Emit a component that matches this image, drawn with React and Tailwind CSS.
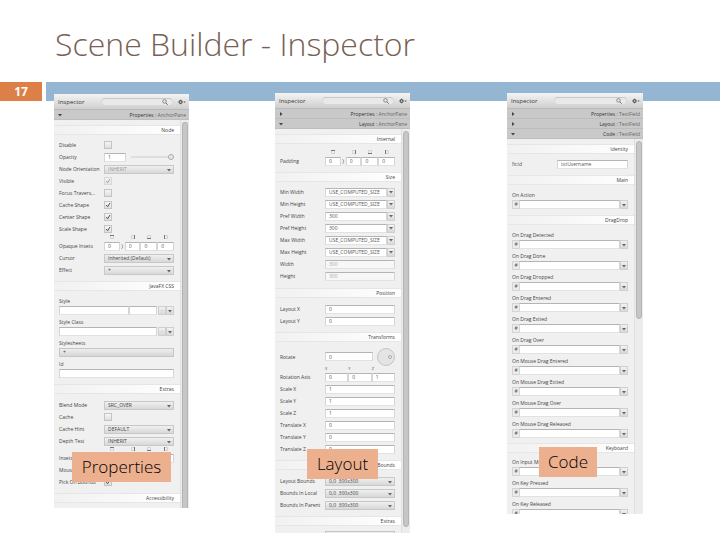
import { useId } from "react";
import clsx from "clsx";

const textBox =
  "h-[9px] min-w-0 border border-t-[#b4b4b4] border-x-[#d6d6d6] border-b-[#e2e2e2] bg-white pl-[3px] text-[5px] leading-[7px] text-[#555] outline-none";
const smallButton =
  "flex h-[9px] w-2 shrink-0 items-center justify-center border border-[#cfcfcf] bg-gradient-to-b from-[#f2f2f2] to-[#d9d9d9]";

function Arrow({ className = "fill-[#666]", dir = "down" }) {
  return (
    <svg viewBox="0 0 4 4" className={clsx("size-1 shrink-0", className)} aria-hidden="true">
      <path d={dir === "down" ? "M0 1h4L2 3.5z" : "M1 0v4L3.5 2z"} />
    </svg>
  );
}

function Header() {
  return (
    <div className="flex h-4 items-center gap-[5px] border-b border-[#b9b9b9] bg-gradient-to-b from-[#f4f4f4] to-[#cfcfcf] pr-[3px] pl-1">
      <h2 className="w-[38px] text-[6px] leading-[8px] text-[#333]">Inspector</h2>
      <div className="flex h-2 min-w-0 flex-1 items-center rounded-full border border-[#d8d8d8] border-t-[#c8c8c8] bg-[#e9e9e9] pr-1">
        <input type="search" aria-label="Search" className="h-full min-w-0 flex-1 bg-transparent pl-1 text-[5px] outline-none" />
        <svg viewBox="0 0 6 6" className="size-[6px] shrink-0 fill-none stroke-[#666]" aria-hidden="true">
          <circle cx="2.5" cy="2.4" r="1.8" strokeWidth="0.7" />
          <path d="M3.8 3.8l2 2" strokeWidth="0.9" />
        </svg>
      </div>
      <button aria-label="Options" className="shrink-0">
        <svg viewBox="0 0 8 6" className="h-[6px] w-2" aria-hidden="true">
          <circle cx="2.6" cy="3" r="1.4" fill="none" stroke="#555" strokeWidth="1.1" />
          <path d="M2.6 .6v1M2.6 4.4v1M.2 3h1M4 3h1" stroke="#555" strokeWidth="0.7" />
          <path d="M5.4 2.4h2.4L6.6 4z" fill="#666" />
        </svg>
      </button>
    </div>
  );
}

function PaneTitle({ name, type, open }) {
  return (
    <button className="flex h-[10px] w-full items-center justify-between border-b border-[#bdbdbd] bg-[#c9c9c9] pr-[3px] pl-1 text-[5px] leading-[8px]">
      <Arrow dir={open ? "down" : "right"} className="fill-[#444]" />
      <span className="text-[#333]">
        {name} <span className="text-[#666]">: {type}</span>
      </span>
    </button>
  );
}

function Section({ title, children, className }) {
  return (
    <section>
      <h3 className="h-[10px] border-y border-[#e6e6e6] bg-gradient-to-r from-[#f1f1f1] to-white pr-[6px] text-right text-[5px] leading-[8px] text-[#444]">
        {title}
      </h3>
      <div className={clsx("pr-[6px] pl-[5px]", className)}>{children}</div>
    </section>
  );
}

function Row({ label, id, children, tall }) {
  return (
    <div className={clsx("flex items-center", tall ? "h-[19px]" : "h-3")}>
      <label htmlFor={id} className="w-[45px] shrink-0 whitespace-nowrap text-[5px] leading-[8px] text-[#444]">
        {label}
      </label>
      <div className="flex min-w-0 flex-1 items-center">{children}</div>
    </div>
  );
}

function CheckRow({ label, checked, disabled }) {
  const id = useId();
  return (
    <Row label={label} id={id}>
      <span className={clsx("relative size-2", disabled && "opacity-50")}>
        <input
          id={id}
          type="checkbox"
          defaultChecked={checked}
          disabled={disabled}
          className="peer block size-2 appearance-none border border-[#c4c4c4] bg-gradient-to-b from-[#f6f6f6] to-[#dedede]"
        />
        <svg viewBox="0 0 8 8" className="pointer-events-none absolute inset-0 hidden size-2 fill-none stroke-[#555] peer-checked:block">
          <path d="M2.2 4l1.4 1.8L6 2" />
        </svg>
      </span>
    </Row>
  );
}

function SelectRow({ label, value, disabled }) {
  const id = useId();
  return (
    <Row label={label} id={id}>
      <span className="relative min-w-0 flex-1">
        <select
          id={id}
          disabled={disabled}
          className="block h-[9px] w-full appearance-none border border-[#c8c8c8] bg-gradient-to-b from-[#f0f0f0] to-[#d8d8d8] pl-[3px] text-[5px] leading-[7px] text-[#444] disabled:text-[#999] disabled:opacity-100"
        >
          <option>{value}</option>
        </select>
        <Arrow className="pointer-events-none absolute top-[3px] right-[3px] fill-[#666]" />
      </span>
    </Row>
  );
}

function TextRow({ label, value, disabled }) {
  const id = useId();
  return (
    <Row label={label} id={id}>
      <input id={id} defaultValue={value} disabled={disabled} className={clsx(textBox, "flex-1 disabled:bg-[#f7f7f7] disabled:text-[#aaa]")} />
    </Row>
  );
}

function ComboRow({ label, value }) {
  const id = useId();
  return (
    <Row label={label} id={id}>
      <input id={id} defaultValue={value} className={clsx(textBox, "flex-1")} />
      <button aria-label={`${label} options`} className={smallButton}>
        <Arrow />
      </button>
    </Row>
  );
}

const sides = [
  { name: "top", edge: "M0 .5h4" },
  { name: "right", edge: "M3.5 0v4" },
  { name: "bottom", edge: "M0 3.5h4" },
  { name: "left", edge: "M.5 0v4" },
];

function InsetsRow({ label }) {
  const id = useId();
  const grid = "grid grid-cols-[16fr_5fr_16fr_17fr_17fr]";
  return (
    <>
      <div className={clsx(grid, "h-[5px] pl-[45px]")} aria-hidden="true">
        {sides.map((side, i) => (
          <svg key={side.name} viewBox="0 0 4 4" className={clsx("size-1 justify-self-center fill-none", i === 1 && "col-start-3")}>
            <path d="M.5 .5h3v3h-3z" stroke="#d2d2d2" />
            <path d={side.edge} stroke="#777" />
          </svg>
        ))}
      </div>
      <Row label={label} id={id}>
        <div className={clsx(grid, "min-w-0 flex-1 items-center")}>
          {sides.map((side, i) => (
            <input
              key={side.name}
              id={i === 0 ? id : undefined}
              aria-label={i === 0 ? undefined : `${label} ${side.name}`}
              defaultValue="0"
              className={clsx(textBox, "row-start-1 w-full", i === 1 && "col-start-3")}
            />
          ))}
          <svg viewBox="0 0 5 9" className="col-start-2 row-start-1 h-[9px] w-full fill-none stroke-[#999]">
            <path d="M1.5 2.5q2 .5 1 2q1 1.500-1 2" />
          </svg>
        </div>
      </Row>
    </>
  );
}

function OpacityRow() {
  const id = useId();
  return (
    <Row label="Opacity" id={id}>
      <input id={id} defaultValue="1" className={clsx(textBox, "w-[22px]")} />
      <input
        type="range"
        aria-label="Opacity slider"
        defaultValue="100"
        className="ml-[5px] h-2 min-w-0 flex-1 appearance-none bg-transparent [&::-webkit-slider-runnable-track]:h-[2px] [&::-webkit-slider-runnable-track]:bg-[#dedede] [&::-webkit-slider-thumb]:mt-[-2px] [&::-webkit-slider-thumb]:size-[6px] [&::-webkit-slider-thumb]:appearance-none [&::-webkit-slider-thumb]:rounded-full [&::-webkit-slider-thumb]:border [&::-webkit-slider-thumb]:border-[#aaa] [&::-webkit-slider-thumb]:bg-[#e6e6e6]"
      />
    </Row>
  );
}

function Stacked({ label, id, children }) {
  return (
    <div>
      <label htmlFor={id} className="block h-[9px] text-[5px] leading-[9px] whitespace-nowrap text-[#444]">
        {label}
      </label>
      <div className="flex">{children}</div>
    </div>
  );
}

function ListButtons({ name }) {
  return (
    <>
      <button aria-label={`Remove ${name}`} className={clsx(smallButton, "ml-px text-[5px] text-[#999]")}>
        -
      </button>
      <button aria-label={`${name} menu`} className={smallButton}>
        <Arrow />
      </button>
    </>
  );
}

function EventField({ label }) {
  const id = useId();
  return (
    <Stacked label={label} id={id}>
      <span className="h-[9px] w-[7px] border-y border-l border-[#d4d4d4] bg-[#ececec] text-center text-[5px] leading-[7px] text-[#555]">#</span>
      <input id={id} className={clsx(textBox, "flex-1")} />
      <button aria-label={`${label} options`} className={smallButton}>
        <Arrow />
      </button>
    </Stacked>
  );
}

function Inspector({ titles, caption, captionClass, thumbClass, className, children }) {
  return (
    <article className={clsx("relative min-w-0 bg-[#f0f0f0]", className)}>
      <Header />
      {titles.map((t) => (
        <PaneTitle key={t.name} {...t} />
      ))}
      <div className="flex">
        <div className="min-w-0 flex-1 border-r border-[#e0e0e0] pt-[5px]">{children}</div>
        <div className="flex w-2 shrink-0 justify-center bg-[#ececec] pt-[2px]">
          <div className={clsx("w-[6px] rounded-full border border-[#b4b4b4] bg-[#c6c6c6]", thumbClass)} />
        </div>
      </div>
      <p className={clsx("absolute flex h-[30px] items-center justify-center bg-[#ecb08e] text-[17px] font-light text-black", captionClass)}>
        {caption}
      </p>
    </article>
  );
}

const dragEvents = [
  "On Drag Detected",
  "On Drag Done",
  "On Drag Dropped",
  "On Drag Entered",
  "On Drag Exited",
  "On Drag Over",
  "On Mouse Drag Entered",
  "On Mouse Drag Exited",
  "On Mouse Drag Over",
  "On Mouse Drag Released",
];

function PropertiesPanel() {
  return (
    <Inspector
      titles={[{ name: "Properties", type: "AnchorPane", open: true }]}
      caption="Properties"
      captionClass="bottom-[26px] left-[18px] w-[99px]"
      thumbClass="rounded-b-none border-b-0"
      className="col-start-1 mt-px"
    >
      <Section title="Node" className="pt-1 pb-[5px]">
        <CheckRow label="Disable" />
        <OpacityRow />
        <SelectRow label="Node Orientation" value="INHERIT" disabled />
        <CheckRow label="Visible" checked disabled />
        <CheckRow label="Focus Travers..." />
        <CheckRow label="Cache Shape" checked />
        <CheckRow label="Center Shape" checked />
        <CheckRow label="Scale Shape" checked />
        <InsetsRow label="Opaque Insets" />
        <SelectRow label="Cursor" value="Inherited (Default)" />
        <SelectRow label="Effect" value="+" />
      </Section>
      <Section title="JavaFX CSS" className="flex flex-col gap-[3px] pt-[6px] pb-[6px]">
        <Stacked label="Style" id="style">
          <input id="style" className={clsx(textBox, "flex-[73]")} />
          <input aria-label="Style value" className={clsx(textBox, "flex-[26]")} />
          <ListButtons name="style" />
        </Stacked>
        <Stacked label="Style Class" id="style-class">
          <input id="style-class" className={clsx(textBox, "flex-1")} />
          <ListButtons name="style class" />
        </Stacked>
        <Stacked label="Stylesheets" id="stylesheets">
          <button
            id="stylesheets"
            className="h-[9px] flex-1 border border-[#c6c6c6] bg-gradient-to-b from-[#eee] to-[#d6d6d6] pl-[3px] text-left text-[5px] leading-[7px] text-[#444]"
          >
            +
          </button>
        </Stacked>
        <Stacked label="Id" id="node-id">
          <input id="node-id" className={clsx(textBox, "flex-1")} />
        </Stacked>
      </Section>
      <Section title="Extras" className="pt-[5px] pb-[5px]">
        <SelectRow label="Blend Mode" value="SRC_OVER" />
        <CheckRow label="Cache" />
        <SelectRow label="Cache Hint" value="DEFAULT" />
        <SelectRow label="Depth Test" value="INHERIT" />
        <InsetsRow label="Insets" />
        <CheckRow label="Mouse Transparent" />
        <CheckRow label="Pick On Bounds" checked />
      </Section>
      <Section title="Accessibility" className="pt-[5px]" />
    </Inspector>
  );
}

function LayoutPanel() {
  return (
    <Inspector
      titles={[
        { name: "Properties", type: "AnchorPane" },
        { name: "Layout", type: "AnchorPane", open: true },
      ]}
      caption="Layout"
      captionClass="bottom-[54px] left-8 w-[71px]"
      thumbClass="mb-[6px]"
      className="col-start-3"
    >
      <Section title="Internal" className="pt-[6px] pb-[5px]">
        <InsetsRow label="Padding" />
      </Section>
      <Section title="Size" className="pt-1 pb-[6px]">
        <ComboRow label="Min Width" value="USE_COMPUTED_SIZE" />
        <ComboRow label="Min Height" value="USE_COMPUTED_SIZE" />
        <ComboRow label="Pref Width" value="300" />
        <ComboRow label="Pref Height" value="300" />
        <ComboRow label="Max Width" value="USE_COMPUTED_SIZE" />
        <ComboRow label="Max Height" value="USE_COMPUTED_SIZE" />
        <TextRow label="Width" value="300" disabled />
        <TextRow label="Height" value="300" disabled />
      </Section>
      <Section title="Position" className="pt-[5px] pb-[5px]">
        <TextRow label="Layout X" value="0" />
        <TextRow label="Layout Y" value="0" />
      </Section>
      <Section title="Transforms" className="pt-[5px] pb-[5px]">
        <Row label="Rotate" id="rotate" tall>
          <input id="rotate" defaultValue="0" className={clsx(textBox, "flex-1")} />
          <svg viewBox="0 0 18 18" className="ml-1 size-[18px] shrink-0">
            <circle cx="9" cy="9" r="8.500" fill="#e4e4e4" stroke="#c4c4c4" />
            <circle cx="13" cy="9" r="1.500" fill="#eee" stroke="#999" strokeWidth="0.8" />
          </svg>
        </Row>
        <div className="grid h-[5px] grid-cols-3 pl-[45px] text-[4px] leading-[5px] text-[#555]">
          <span>X</span>
          <span>Y</span>
          <span>Z</span>
        </div>
        <Row label="Rotation Axis" id="axis-x">
          <input id="axis-x" defaultValue="0" className={clsx(textBox, "flex-1")} />
          <input aria-label="Rotation axis Y" defaultValue="0" className={clsx(textBox, "flex-1")} />
          <input aria-label="Rotation axis Z" defaultValue="1" className={clsx(textBox, "flex-1")} />
        </Row>
        <TextRow label="Scale X" value="1" />
        <TextRow label="Scale Y" value="1" />
        <TextRow label="Scale Z" value="1" />
        <TextRow label="Translate X" value="0" />
        <TextRow label="Translate Y" value="0" />
        <TextRow label="Translate Z" value="0" />
      </Section>
      <Section title="Bounds" className="pt-[5px] pb-[5px]">
        <SelectRow label="Layout Bounds" value={"0,0\u00a0 300x300"} />
        <SelectRow label="Bounds In Local" value={"0,0\u00a0 300x300"} />
        <SelectRow label="Bounds In Parent" value={"0,0\u00a0 300x300"} />
      </Section>
      <Section title="Extras" className="pt-[5px]">
        <div className="ml-[45px] h-[2px] border-x border-t border-[#c4c4c4] bg-[#eee]" />
      </Section>
    </Inspector>
  );
}

function CodePanel() {
  return (
    <Inspector
      titles={[
        { name: "Properties", type: "TextField" },
        { name: "Layout", type: "TextField" },
        { name: "Code", type: "TextField", open: true },
      ]}
      caption="Code"
      captionClass="bottom-[37px] left-8 w-[58px]"
      thumbClass="h-[178px]"
      className="col-start-5"
    >
      <Section title="Identity" className="pt-1 pb-[5px]">
        <TextRow label="fx:id" value="txtUsername" />
      </Section>
      <Section title="Main" className="pt-[6px] pb-[6px]">
        <EventField label="On Action" />
      </Section>
      <Section title="DragDrop" className="flex flex-col gap-[3px] pt-[6px] pb-[5px]">
        {dragEvents.map((name) => (
          <EventField key={name} label={name} />
        ))}
      </Section>
      <Section title="Keyboard" className="flex flex-col gap-[3px] pt-[5px]">
        <EventField label="On Input Method" />
        <EventField label="On Key Pressed" />
        {/* last field is cut off by the bottom of the pane */}
        <div className="h-[14px] overflow-hidden">
          <EventField label="On Key Released" />
        </div>
      </Section>
    </Inspector>
  );
}

export default function App() {
  return (
    <main className="min-h-screen bg-white font-['Open_Sans','Noto_Sans',sans-serif]">
      <h1 className="pt-6 pb-[18px] pl-[55px] text-[32px] leading-[40px] font-light text-[#775f55]">Scene Builder - Inspector</h1>
      <div className="flex h-[19px] gap-1">
        <div className="flex w-[42px] items-center justify-center bg-[#dd8047] text-[12px] font-bold text-white">17</div>
        <div className="flex-1 bg-[#94b6d2]" />
      </div>
      <div className="-mt-2 grid grid-cols-[135fr_86fr_135fr_97fr_136fr] items-start pr-[77px] pl-[54px]">
        <PropertiesPanel />
        <LayoutPanel />
        <CodePanel />
      </div>
    </main>
  );
}
